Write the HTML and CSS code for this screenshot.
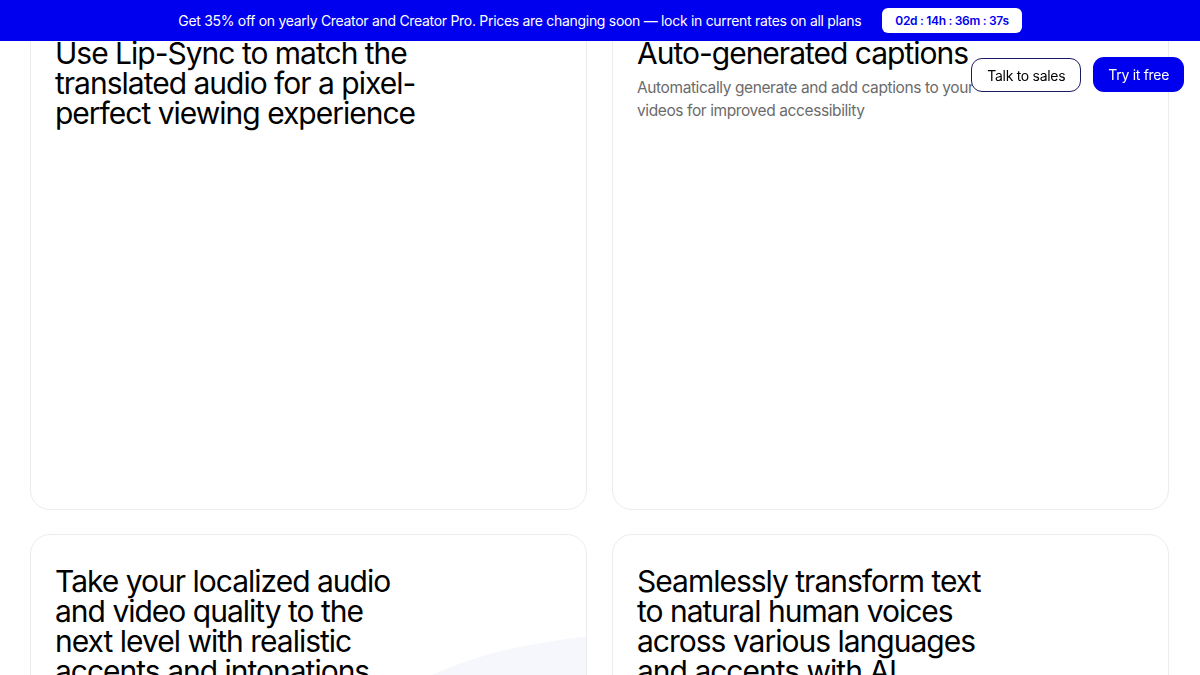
FILE: index.html
```html
<!DOCTYPE html>
<html lang="en">
<head>
    <meta charset="UTF-8">
    <meta name="viewport" content="width=device-width, initial-scale=1.0">
    <title>Dubbing features</title>
    <link rel="stylesheet" href="styles.css">
</head>
<body>
    <div class="promo-bar">
        <span class="promo-text">Get 35% off on yearly Creator and Creator Pro. Prices are changing soon — lock in current rates on all plans</span>
        <span class="countdown">02d : 14h : 36m : 37s</span>
    </div>

    <div class="nav-actions">
        <a class="btn btn-outline" href="#">Talk to sales</a>
        <a class="btn btn-primary" href="#">Try it free</a>
    </div>

    <main class="features">
        <section class="card">
            <h2>Use Lip-Sync to match the translated audio for a pixel-perfect viewing experience</h2>
        </section>
        <section class="card">
            <h2>Auto-generated captions</h2>
            <p>Automatically generate and add captions to your videos for improved accessibility</p>
        </section>
        <section class="card card-glow">
            <h2>Take your localized audio and video quality to the next level with realistic accents and intonations</h2>
        </section>
        <section class="card">
            <h2>Seamlessly transform text to natural human voices across various languages and accents with AI</h2>
        </section>
    </main>
</body>
</html>
```

FILE: styles.css
```css
* {
    margin: 0;
    padding: 0;
    box-sizing: border-box;
}

body {
    font-family: 'Inter', 'Liberation Sans', sans-serif;
    background-color: #fff;
    color: #000;
    overflow: hidden;
}

.promo-bar {
    position: fixed;
    top: 0;
    left: 0;
    right: 0;
    height: 41px;
    background-color: #0000ee;
    color: #fff;
    display: flex;
    align-items: center;
    justify-content: center;
    gap: 21px;
    font-size: 14px;
    letter-spacing: -0.3px;
    z-index: 10;
}

.countdown {
    background-color: #fff;
    color: #0000ee;
    font-size: 12px;
    font-weight: 600;
    padding: 5px 13px;
    border-radius: 6px;
    letter-spacing: -0.3px;
}

.nav-actions {
    position: fixed;
    top: 57px;
    right: 16px;
    display: flex;
    gap: 12px;
    z-index: 10;
}

.btn {
    display: inline-flex;
    align-items: center;
    height: 35px;
    padding: 0 15px;
    font-size: 14px;
    letter-spacing: -0.3px;
    text-decoration: none;
    border-radius: 11px;
}

.btn-outline {
    background-color: #fff;
    color: #000;
    border: 1px solid #1a1a66;
    margin-top: 1px;
    height: 34px;
}

.btn-primary {
    background-color: #0000ee;
    color: #fff;
}

.features {
    display: grid;
    grid-template-columns: 1fr 1fr;
    gap: 24px 25px;
    padding: 6px 31px 0 30px;
}

.card {
    position: relative;
    height: 504px;
    border: 1px solid #ececec;
    border-radius: 20px;
    padding: 31px 24px;
    overflow: hidden;
    background-color: #fff;
}

.card h2 {
    position: relative;
    z-index: 1;
    font-size: 30px;
    font-weight: 400;
    line-height: 30px;
    letter-spacing: -1px;
    max-width: 372px;
}

.card p {
    margin-top: 8px;
    font-size: 15.5px;
    line-height: 23px;
    color: #6b6b6b;
    letter-spacing: -0.4px;
    max-width: 350px;
}

.card-glow::after {
    content: "";
    position: absolute;
    left: 329px;
    top: 98px;
    width: 600px;
    height: 240px;
    border-radius: 50%;
    background-color: #f6f6fd;
}
```
